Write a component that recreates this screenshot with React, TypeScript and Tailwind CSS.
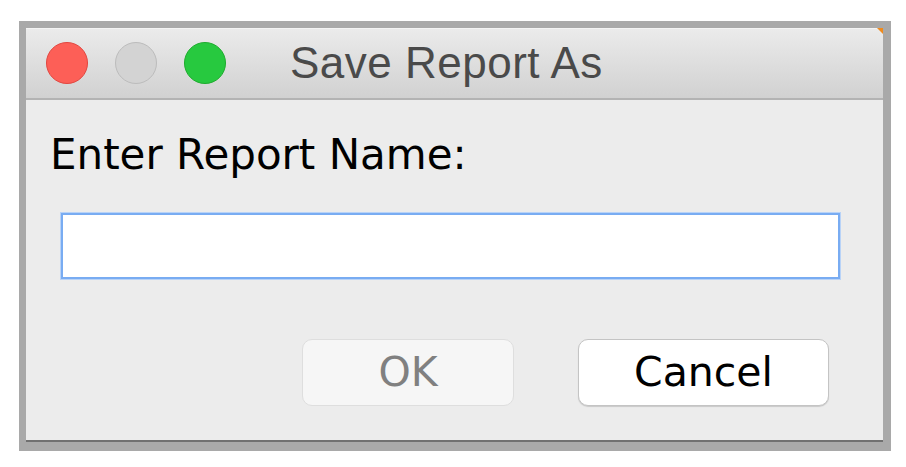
import React from 'react';

const uiFont = { fontFamily: '"DejaVu Sans", "Liberation Sans", sans-serif' };

export default function App() {
  return (
    <div className="w-[906px] h-[467px] bg-white overflow-hidden">
      {/* outer grey frame */}
      <div className="ml-[19px] mt-[21px] w-[872px] h-[430px] bg-[#a9a9a9] pl-[7px] pt-[7px]">
        <div className="relative w-[857px] h-[414px] bg-[#ececec] border-b-2 border-[#707070] flex flex-col">
          {/* title bar */}
          <div className="h-[72px] flex items-center pl-[20px] pb-[2px] bg-gradient-to-b from-[#ebebeb] to-[#d1d1d1] border-b-2 border-[#b3b3b3] border-t border-t-[#f4f4f4]">
            <div className="flex gap-[27px]">
              <div className="w-[42px] h-[42px] rounded-full bg-[#fd5f57] border border-[#e2463f]" />
              <div className="w-[42px] h-[42px] rounded-full bg-[#d3d3d3] border border-[#bcbcbc]" />
              <div className="w-[42px] h-[42px] rounded-full bg-[#27c93f] border border-[#1dac2d]" />
            </div>
            <span
              className="ml-[64px] text-[44px] tracking-[0.5px] text-[#4a4a4a] leading-none"
              style={{ fontFamily: '"Liberation Sans", Arial, sans-serif' }}
            >
              Save Report As
            </span>
          </div>
          <div className="absolute right-0 top-0 w-0 h-0 border-t-[6px] border-t-[#f08a1c] border-l-[6px] border-l-transparent" />

          {/* body */}
          <div className="flex flex-col" style={uiFont}>
            <div className="mt-[31px] pl-[24px] text-[42px] leading-[48px] text-black">Enter Report Name:</div>
            <input
              type="text"
              className="mt-[34px] ml-[35px] w-[779px] h-[66px] bg-white border-2 border-[#79acf2] shadow-[0_0_0_1px_#b9d3f7] outline-none"
            />
            <div className="mt-[60px] flex justify-end gap-[64px] pr-[54px]">
              <button className="w-[212px] h-[67px] rounded-[10px] bg-[#f6f6f6] border border-[#dedede] text-[41px] text-[#808080] leading-none">
                OK
              </button>
              <button className="w-[251px] h-[67px] rounded-[10px] bg-white border border-[#c4c4c4] shadow-[0_1px_1px_rgba(0,0,0,0.15)] text-[41px] text-black leading-none">
                Cancel
              </button>
            </div>
          </div>
        </div>
      </div>
    </div>
  );
}
